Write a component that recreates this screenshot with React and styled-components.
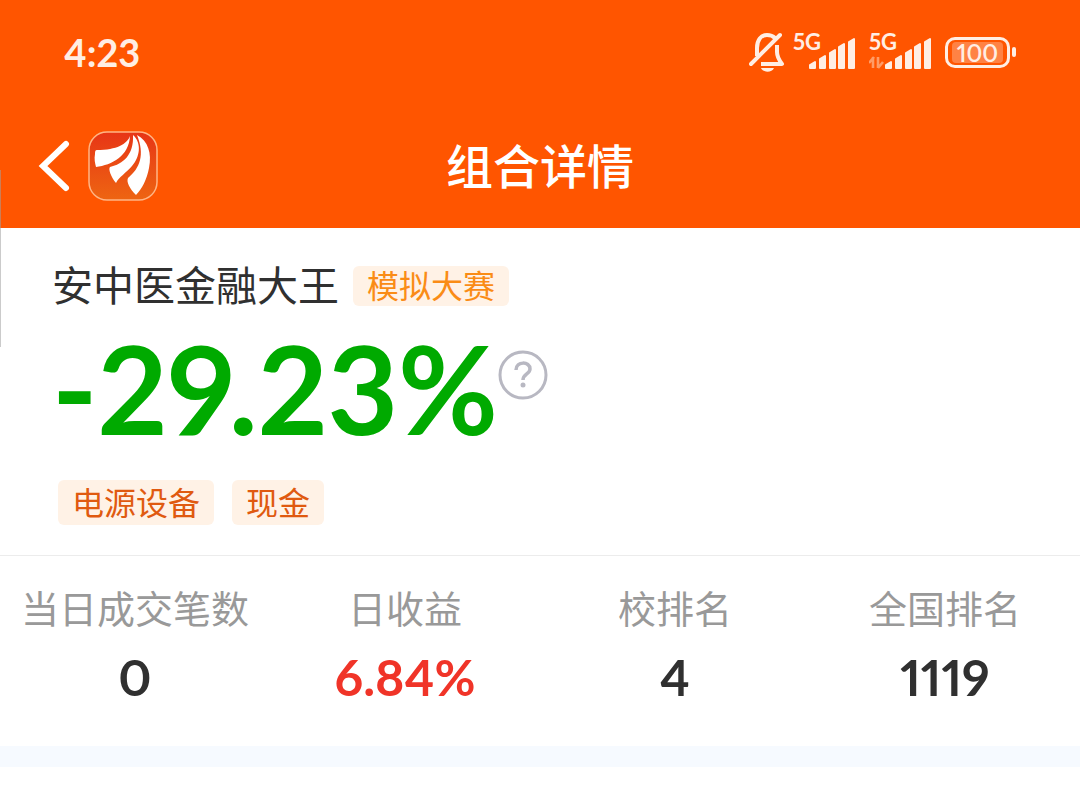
import React from "react";
import styled, {createGlobalStyle} from "styled-components";

const GlobalStyle = createGlobalStyle`
    * {
        box-sizing: border-box;
    }

    body {
        margin: 0;
        background-color: #ffffff;
        color: #303030;
        font-family: Lato, "Noto Sans CJK SC", sans-serif;
        font-variant-numeric: proportional-nums;
    }
`

const Page = styled.div`
    position: relative;
    min-height: 100vh;
`

const EdgeHandle = styled.div`
    position: absolute;
    top: 170px;
    left: 0;
    width: 1px;
    height: 177px;
    background-color: rgba(160, 160, 160, 0.55);
`

const Header = styled.header`
    background-color: #ff5500;
    color: #ffffff;
`

const StatusBar = styled.div`
    display: flex;
    align-items: center;
    justify-content: space-between;
    height: 104px;
    padding: 0 64px;
    color: #ffeee4;
`

const Clock = styled.span`
    font-size: 38px;
    font-weight: 700;
    line-height: 40px;
`

const StatusIcons = styled.div`
    display: flex;
    align-items: center;
    gap: 8px;
`

const Signal = styled.span`
    display: flex;
    align-items: flex-start;
    height: 40px;
    width: 68px;
    position: relative;
    font-size: 22px;
    font-weight: 700;
    line-height: 20px;

    svg {
        position: absolute;
        left: 0;
        top: 0;
    }
`

const Battery = styled.span`
    display: flex;
    align-items: center;
    gap: 2px;

    &::after {
        content: "";
        width: 4px;
        height: 10px;
        border-radius: 2px;
        background-color: #ffeee4;
    }
`

const BatteryBody = styled.span`
    width: 65px;
    height: 31px;
    padding: 2px 4px;
    border: 3px solid #ffeee4;
    border-radius: 10px;
`

const BatteryLevel = styled.span`
    display: block;
    height: 21px;
    border-radius: 4px;
    background-color: #ff8244;
    font-size: 24px;
    font-weight: 600;
    line-height: 21px;
    text-align: center;
`

const NavBar = styled.nav`
    display: grid;
    grid-template-columns: 1fr auto 1fr;
    align-items: center;
    height: 124px;
    padding: 0 36px;
`

const NavLeft = styled.div`
    display: flex;
    align-items: center;
    gap: 16px;
`

const IconButton = styled.button`
    display: flex;
    padding: 0;
    border: 0;
    background: none;
    color: inherit;
`

const Title = styled.h1`
    margin: 0;
    font-size: 47px;
    font-weight: 500;
    line-height: 56px;
`

const Summary = styled.section`
    padding: 32px 52px 30px;
    border-bottom: 1px solid #ececec;
`

const NameRow = styled.div`
    display: flex;
    align-items: center;
    gap: 14px;
`

const Name = styled.h2`
    margin: 0;
    font-size: 41px;
    font-weight: 400;
    line-height: 52px;
`

const Tag = styled.span`
    padding: 0 14px;
    border-radius: 6px;
    background-color: #fff2e6;
    color: ${props => props.$color};
    font-size: 32px;
    line-height: ${props => props.$height};
`

const ReturnRow = styled.div`
    display: flex;
    align-items: flex-start;
    height: 168px;
`

const TotalReturn = styled.strong`
    color: #00aa00;
    font-size: 122px;
    font-weight: 700;
    line-height: 152px;
`

const HelpButton = styled(IconButton)`
    margin-top: 38px;
    color: #b8b8c2;
`

const TagRow = styled.div`
    display: flex;
    gap: 18px;
    padding-left: 6px;
`

const Stats = styled.dl`
    display: grid;
    grid-template-columns: repeat(4, 1fr);
    margin: 0;
    padding: 24px 0 36px;
    border-bottom: 21px solid #f6faff;
    text-align: center;
`

const StatLabel = styled.dt`
    color: #999999;
    font-size: 38px;
    line-height: 56px;
    white-space: nowrap;
`

const StatValue = styled.dd`
    margin: 8px 0 0;
    color: ${props => props.$color || "#303030"};
    font-size: 50px;
    font-weight: 700;
    line-height: 66px;
`

const stats = [
    {label: "当日成交笔数", value: "0"},
    {label: "日收益", value: "6.84%", color: "#f03428"},
    {label: "校排名", value: "4"},
    {label: "全国排名", value: "1119"},
]

function MutedBell() {
    return (
        <svg width="36" height="40" viewBox="0 0 36 40" fill="none" stroke="#ffeee4" strokeWidth="4">
            <path d="M8 24V16C8 8 12 3 18 3C21 3 24 4 26 6"/>
            <path d="M28 13V20C28 25 30 28 33 32H12" strokeLinejoin="round"/>
            <path d="M2 32L31 3" strokeLinecap="round"/>
            <path d="M12 36H25C23 41 14 41 12 36Z" fill="#ffeee4" stroke="none"/>
        </svg>
    )
}

function SignalBars({data}) {
    return (
        <Signal>
            5G
            <svg width="68" height="40" viewBox="0 0 68 40" fill="#ffeee4">
                <path d="M17 33L22 30V36H17ZM27 27L32 24V36H27ZM37 21L42 18V36H37ZM46 15L51 12V36H46ZM56 10L61 7V36H56Z" stroke="#ffeee4" strokeWidth="2" strokeLinejoin="round"/>
                {data && <path d="M4 25V36M5 25L0 31M9 36V25M9 36L14 30" stroke="#ff9c66" strokeWidth="2.6" fill="none"/>}
            </svg>
        </Signal>
    )
}

function AppLogo() {
    return (
        <svg width="70" height="70" viewBox="0 0 70 70">
            <defs>
                <linearGradient id="logoFill" x1="0" y1="0" x2="0" y2="1">
                    <stop offset="0" stopColor="#e73516"/>
                    <stop offset="1" stopColor="#ee6512"/>
                </linearGradient>
            </defs>
            <rect x="1" y="1" width="68" height="68" rx="18" fill="url(#logoFill)" stroke="#ffb585" strokeWidth="1.5"/>
            <g fill="#ffffff">
                <path d="M42 5C39 13 29 19 9 19C7 19 7 21 7 23C6 28 7 32 8 36C24 34 41 25 42 5Z"/>
                <path d="M45 4C46 24 35 33 22 36C20 38 23 46 28 52C31 46 38 42 44 35C52 26 54 12 45 4Z"/>
                <path d="M49 4C57 24 52 37 40 47C38 51 42 58 48 64C54 58 59 48 61 37C64 22 60 10 49 4Z"/>
            </g>
        </svg>
    )
}

function App() {
    return (
        <Page>
            <GlobalStyle/>
            <Header>
                <StatusBar>
                    <Clock>4:23</Clock>
                    <StatusIcons>
                        <MutedBell/>
                        <SignalBars/>
                        <SignalBars data/>
                        <Battery>
                            <BatteryBody>
                                <BatteryLevel>100</BatteryLevel>
                            </BatteryBody>
                        </Battery>
                    </StatusIcons>
                </StatusBar>
                <NavBar>
                    <NavLeft>
                        <IconButton type="button" aria-label="返回">
                            <svg width="36" height="52" viewBox="0 0 36 52" fill="none" stroke="#ffffff" strokeWidth="6">
                                <path d="M30 4L7 26L30 48" strokeLinecap="round"/>
                            </svg>
                        </IconButton>
                        <AppLogo/>
                    </NavLeft>
                    <Title>组合详情</Title>
                </NavBar>
            </Header>
            <main>
                <Summary>
                    <NameRow>
                        <Name>安中医金融大王</Name>
                        <Tag $color="#fa8c16" $height="40px">模拟大赛</Tag>
                    </NameRow>
                    <ReturnRow>
                        <TotalReturn>-29.23%</TotalReturn>
                        <HelpButton type="button" aria-label="收益说明">
                            <svg width="50" height="50" viewBox="0 0 50 50" fill="none" stroke="currentColor">
                                <circle cx="25" cy="25" r="23" strokeWidth="3"/>
                                <path d="M18 20C18 11 32 11 32 19C32 24 25 24 25 30" strokeWidth="3.5"/>
                                <circle cx="25" cy="35" r="2.5" fill="currentColor" stroke="none"/>
                            </svg>
                        </HelpButton>
                    </ReturnRow>
                    <TagRow>
                        <Tag $color="#e05a10" $height="45px">电源设备</Tag>
                        <Tag $color="#e05a10" $height="45px">现金</Tag>
                    </TagRow>
                </Summary>
                <Stats>
                    {stats.map(stat => (
                        <div key={stat.label}>
                            <StatLabel>{stat.label}</StatLabel>
                            <StatValue $color={stat.color}>{stat.value}</StatValue>
                        </div>
                    ))}
                </Stats>
            </main>
            <EdgeHandle/>
        </Page>
    )
}

export default App
